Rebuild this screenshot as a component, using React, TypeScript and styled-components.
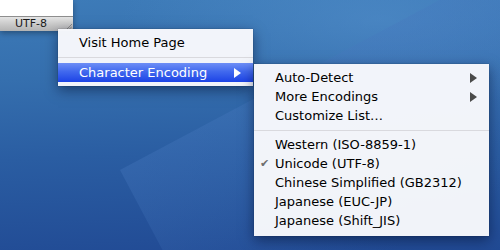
import styled, { createGlobalStyle } from "styled-components";

const GlobalStyle = createGlobalStyle`
  html, body {
    margin: 0;
    padding: 0;
    overflow: hidden;
  }
  body {
    font-family: "DejaVu Sans", "Liberation Sans", sans-serif;
  }
`;

const submenuTop = ["Auto-Detect", "More Encodings", "Customize List…"];
const encodings = [
  "Western (ISO-8859-1)",
  "Unicode (UTF-8)",
  "Chinese Simplified (GB2312)",
  "Japanese (EUC-JP)",
  "Japanese (Shift_JIS)",
];

export default function App() {
  return (
    <Desktop>
      <GlobalStyle />
      <Wedge />
      <Window>
        <WindowBody />
        <StatusBar>
          <StatusLabel>{"UTF-8"}</StatusLabel>
          <Grip viewBox="0 0 6 6">
            <path d="M1 6 L6 1 M3.5 6 L6 3.5" stroke="#7a7a7a" strokeWidth="0.8" />
          </Grip>
        </StatusBar>
      </Window>

      <MainMenu>
        <Item>{"Visit Home Page"}</Item>
        <Separator $space={11} />
        <Item $active>
          {"Character Encoding"}
          <Arrow $light />
        </Item>
      </MainMenu>

      <SubMenu>
        {submenuTop.map((label, i) => (
          <Item key={label}>
            {label}
            {i < 2 && <Arrow />}
          </Item>
        ))}
        <Separator $space={10} />
        {encodings.map((label) => (
          <Item key={label}>
            {label === "Unicode (UTF-8)" && <Check>{"✔"}</Check>}
            {label}
          </Item>
        ))}
      </SubMenu>
    </Desktop>
  );
}

const Desktop = styled.div`
  position: relative;
  width: 500px;
  height: 250px;
  overflow: hidden;
  background:
    radial-gradient(ellipse 260px 90px at 380px 20px, rgba(90, 150, 210, 0.45), transparent),
    linear-gradient(178deg, #3d7bb8 0%, #356fae 30%, #2a5da2 60%, #214a94 100%);
`;

const Wedge = styled.div`
  position: absolute;
  left: 120px;
  top: 170px;
  width: 500px;
  height: 200px;
  transform: rotate(-28deg);
  transform-origin: left top;
  background: linear-gradient(180deg, rgba(70, 120, 190, 0.35), rgba(30, 70, 150, 0));
`;

const Window = styled.div`
  width: 73px;
  display: flex;
  flex-direction: column;
  box-shadow: 0 2px 6px rgba(0, 0, 0, 0.35);
`;

const WindowBody = styled.div`
  height: 16px;
  background: #ffffff;
`;

const StatusBar = styled.div`
  height: 14px;
  display: flex;
  align-items: center;
  padding-left: 15px;
  position: relative;
  border-top: 1px solid #8e8e8e;
  background: linear-gradient(180deg, #e4e4e4 0%, #cacaca 50%, #b3b3b3 100%);
`;

const StatusLabel = styled.span`
  font-size: 11px;
  color: #1a1a1a;
  line-height: 14px;
`;

const Grip = styled.svg`
  position: absolute;
  right: 1px;
  bottom: 2px;
  width: 6px;
  height: 6px;
`;

const Menu = styled.div`
  position: absolute;
  display: flex;
  flex-direction: column;
  background: rgba(246, 247, 251, 0.98);
  box-shadow: 0 4px 12px rgba(0, 10, 40, 0.5), 0 0 1px rgba(0, 0, 0, 0.4);
`;

const MainMenu = styled(Menu)`
  left: 58px;
  top: 29px;
  width: 195px;
  padding: 4px 0 4px;
`;

const SubMenu = styled(Menu)`
  left: 254px;
  top: 64px;
  width: 235px;
  padding: 4px 0 6px;
`;

const Item = styled.div<{ $active?: boolean }>`
  position: relative;
  height: 19px;
  line-height: 19px;
  padding-left: 21px;
  font-size: 13px;
  white-space: nowrap;
  color: ${(p) => (p.$active ? "#ffffff" : "#000000")};
  background: ${(p) =>
    p.$active ? "linear-gradient(180deg, #6d8ef6 0%, #4169ee 45%, #1c43e6 100%)" : "transparent"};
`;

const Separator = styled.div<{ $space: number }>`
  height: ${(p) => p.$space}px;
  display: flex;
  align-items: center;
  &::after {
    content: "";
    flex: 1;
    height: 1px;
    background: #d9d9de;
  }
`;

const Arrow = styled.span<{ $light?: boolean }>`
  position: absolute;
  right: 12px;
  top: 5px;
  width: 0;
  height: 0;
  border-top: 5px solid transparent;
  border-bottom: 5px solid transparent;
  border-left: 7px solid ${(p) => (p.$light ? "#ffffff" : "#4a4a4a")};
`;

const Check = styled.span`
  position: absolute;
  left: 6px;
  top: 0;
  font-size: 11px;
  color: #6e6e6e;
`;
